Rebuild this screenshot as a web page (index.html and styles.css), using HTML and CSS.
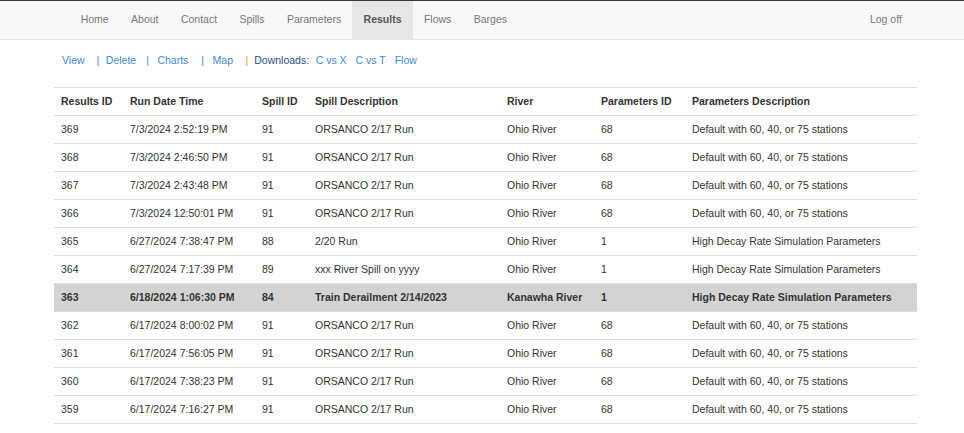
FILE: index.html
```html
<!DOCTYPE html>
<html lang="en">
<head>
  <meta charset="UTF-8" />
  <meta name="viewport" content="width=device-width, initial-scale=1.0"/>
  <title>Results</title>
  <link rel="stylesheet" href="styles.css">
</head>
<body>
  <div class="navbar">
    <div class="nav-inner">
      <ul class="nav">
        <li><a href="#">Home</a></li>
        <li><a href="#">About</a></li>
        <li><a href="#">Contact</a></li>
        <li><a href="#">Spills</a></li>
        <li><a href="#">Parameters</a></li>
        <li class="active"><a href="#">Results</a></li>
        <li><a href="#">Flows</a></li>
        <li><a href="#">Barges</a></li>
      </ul>
      <ul class="nav">
        <li><a href="#">Log off</a></li>
      </ul>
    </div>
  </div>

  <div class="page">
    <div class="actions">
      <a href="#">View</a><span class="sep">|</span><a href="#">Delete</a><span class="sep narrow">|</span><a href="#">Charts</a><span class="sep wide">|</span><a href="#">Map</a><span class="sep last">|</span><span class="dl-label">Downloads:</span><a class="dl" href="#">C vs X</a><a class="dl" href="#">C vs T</a><a class="dl" href="#">Flow</a>
    </div>

    <table class="results">
      <colgroup>
        <col class="c-id">
        <col class="c-date">
        <col class="c-spill">
        <col class="c-desc">
        <col class="c-river">
        <col class="c-pid">
        <col class="c-pdesc">
      </colgroup>
      <thead>
        <tr>
          <th>Results ID</th>
          <th>Run Date Time</th>
          <th>Spill ID</th>
          <th>Spill Description</th>
          <th>River</th>
          <th>Parameters ID</th>
          <th>Parameters Description</th>
        </tr>
      </thead>
      <tbody>
        <tr><td>369</td><td>7/3/2024 2:52:19 PM</td><td>91</td><td>ORSANCO 2/17 Run</td><td>Ohio River</td><td>68</td><td>Default with 60, 40, or 75 stations</td></tr>
        <tr><td>368</td><td>7/3/2024 2:46:50 PM</td><td>91</td><td>ORSANCO 2/17 Run</td><td>Ohio River</td><td>68</td><td>Default with 60, 40, or 75 stations</td></tr>
        <tr><td>367</td><td>7/3/2024 2:43:48 PM</td><td>91</td><td>ORSANCO 2/17 Run</td><td>Ohio River</td><td>68</td><td>Default with 60, 40, or 75 stations</td></tr>
        <tr><td>366</td><td>7/3/2024 12:50:01 PM</td><td>91</td><td>ORSANCO 2/17 Run</td><td>Ohio River</td><td>68</td><td>Default with 60, 40, or 75 stations</td></tr>
        <tr><td>365</td><td>6/27/2024 7:38:47 PM</td><td>88</td><td>2/20 Run</td><td>Ohio River</td><td>1</td><td>High Decay Rate Simulation Parameters</td></tr>
        <tr><td>364</td><td>6/27/2024 7:17:39 PM</td><td>89</td><td>xxx River Spill on yyyy</td><td>Ohio River</td><td>1</td><td>High Decay Rate Simulation Parameters</td></tr>
        <tr class="selected"><td>363</td><td>6/18/2024 1:06:30 PM</td><td>84</td><td>Train Derailment 2/14/2023</td><td>Kanawha River</td><td>1</td><td>High Decay Rate Simulation Parameters</td></tr>
        <tr><td>362</td><td>6/17/2024 8:00:02 PM</td><td>91</td><td>ORSANCO 2/17 Run</td><td>Ohio River</td><td>68</td><td>Default with 60, 40, or 75 stations</td></tr>
        <tr><td>361</td><td>6/17/2024 7:56:05 PM</td><td>91</td><td>ORSANCO 2/17 Run</td><td>Ohio River</td><td>68</td><td>Default with 60, 40, or 75 stations</td></tr>
        <tr><td>360</td><td>6/17/2024 7:38:23 PM</td><td>91</td><td>ORSANCO 2/17 Run</td><td>Ohio River</td><td>68</td><td>Default with 60, 40, or 75 stations</td></tr>
        <tr><td>359</td><td>6/17/2024 7:16:27 PM</td><td>91</td><td>ORSANCO 2/17 Run</td><td>Ohio River</td><td>68</td><td>Default with 60, 40, or 75 stations</td></tr>
      </tbody>
    </table>
  </div>
</body>
</html>
```

FILE: styles.css
```css
body {
  margin: 0;
  font-family: "Liberation Sans", Arial, sans-serif;
  font-size: 10.5px;
  line-height: 15px;
  color: #333;
  background: #fff;
}

a {
  text-decoration: none;
}

/* top navigation */
.navbar {
  background: #f8f8f8;
  border-top: 1px solid #3a3a3a;
  border-bottom: 1px solid #e7e7e7;
}

.nav-inner {
  display: flex;
  justify-content: space-between;
  margin-left: 54px;
  width: 863px;
  box-sizing: border-box;
  padding: 0 4px 0 15.5px;
}

.nav {
  display: flex;
  list-style: none;
  margin: 0;
  padding: 0;
}

.nav a {
  display: block;
  padding: 11px 11.2px 12px;
  color: #777;
}

.nav .active a {
  background: #e7e7e7;
  color: #555;
  font-weight: bold;
}

/* page body */
.page {
  margin-left: 54px;
  width: 863px;
}

.actions {
  padding: 13px 0 0 8px;
  height: 15px;
  margin-bottom: 19px;
  white-space: nowrap;
}

.actions a {
  color: #428bca;
}

.sep {
  color: #428bca;
  margin: 0 6.5px 0 12px;
}

.sep.narrow {
  margin: 0 8.5px 0 10px;
}

.sep.wide {
  margin: 0 8.5px 0 13px;
}

.sep.last {
  color: #ec971f;
  margin: 0 6px 0 12.5px;
}

.dl-label {
  color: #2a4f80;
}

.actions a.dl {
  margin-left: 9px;
}

.dl-label + a.dl {
  margin-left: 6.5px;
}

/* results table */
.results {
  width: 863px;
  border-collapse: collapse;
  table-layout: fixed;
  border-bottom: 1px solid #ddd;
}

.results th,
.results td {
  text-align: left;
  padding: 6px 6px 6px 7px;
  border-top: 1px solid #ddd;
  white-space: nowrap;
}

.results th {
  font-weight: bold;
}

.results tr.selected td {
  background: #d3d3d3;
  font-weight: bold;
}

.c-id { width: 69px; }
.c-date { width: 132px; }
.c-spill { width: 53px; }
.c-desc { width: 192px; }
.c-river { width: 94px; }
.c-pid { width: 91px; }
.c-pdesc { width: 232px; }
```
